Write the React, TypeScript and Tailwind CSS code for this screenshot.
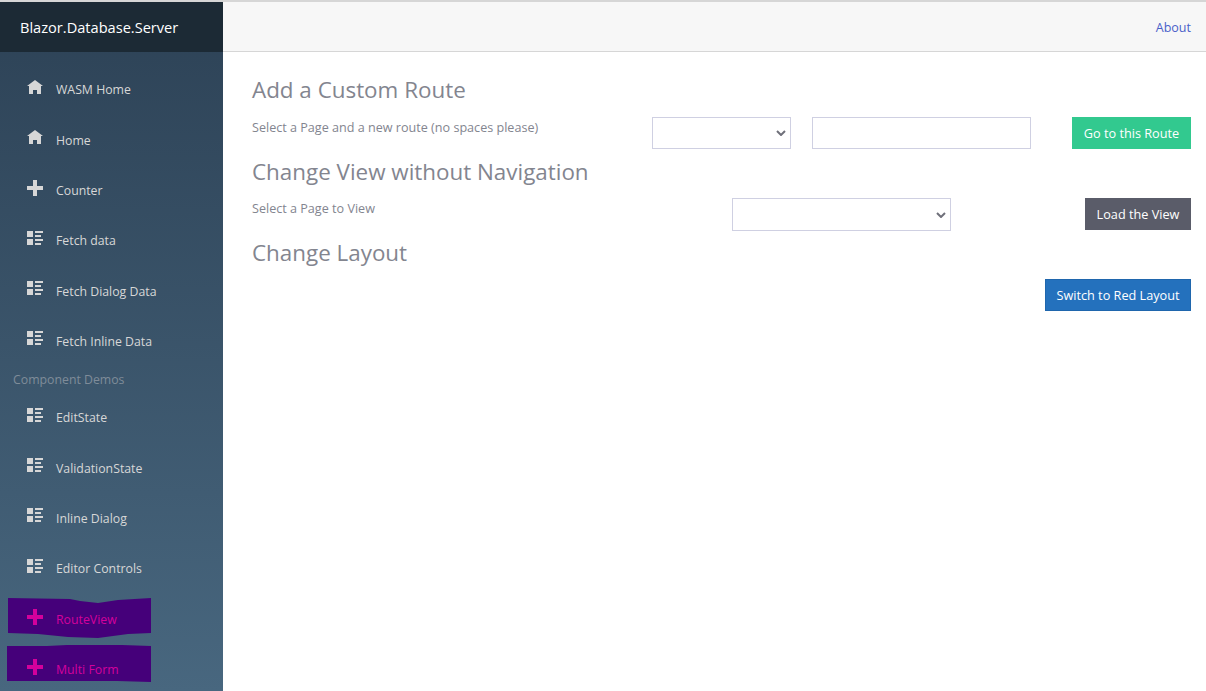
import React from "react";

const HOME = "M4 0l-4 3h1v4h2v-2h2v2h2v-4.03l1 .03-4-3z";
const PLUS = "M3 0v3h-3v2h3v3h2v-3h3v-2h-3v-3h-2z";
const LIST = "M0 0v3h3v-3h-3zm4 0v1h4v-1h-4zm0 2v1h3v-1h-3zm-4 2v3h3v-3h-3zm4 0v1h4v-1h-4zm0 2v1h3v-1h-3z";

function NavItem({ icon, label, purple }: { icon: string; label: string; purple?: 1 | 2 }) {
  return (
    <div className={`relative flex h-[50.33px] items-center pl-[27px] ${purple ? "text-[#d4009c]" : "text-[#d7d7d7]"}`}>
      {purple === 1 && (
        <svg className="absolute left-[8px] top-[3px] h-[41px] w-[143px]" viewBox="0 0 143 41" aria-hidden="true">
          <path d="M0 0 L62 1 L72 3 L90 5 L110 2 L143 0 V35 L120 36 L90 40 L60 39 L30 36 L0 35 Z" fill="#45007a" />
        </svg>
      )}
      {purple === 2 && (
        <svg className="absolute left-[7px] top-[0px] h-[38px] w-[144px]" viewBox="0 0 144 38" aria-hidden="true">
          <path d="M0 1 L40 1 L60 0 L115 0 L144 1 V37 L110 36 L70 36 L30 36 L0 36 Z" fill="#45007a" />
        </svg>
      )}
      <svg viewBox="0 0 8 8" className="relative top-[-3px] h-4 w-4 shrink-0" fill="currentColor" aria-hidden="true">
        <path d={icon} />
      </svg>
      <span className="relative ml-[13px] text-[12.3px]">{label}</span>
    </div>
  );
}

function Section({ title, later, children }: { title: string; later?: boolean; children: React.ReactNode }) {
  return (
    <section className="h-[81px]">
      <h2 className={`text-[22.4px] leading-[30px] text-[#83858f] ${later ? "mb-[11px] pt-px" : "mb-[12px]"}`}>{title}</h2>
      {children}
    </section>
  );
}

function Chevron() {
  return (
    <svg viewBox="0 0 10 6" className="pointer-events-none absolute right-[5px] top-1/2 h-[6px] w-[10px] -translate-y-1/2" fill="none" stroke="#6f707a" strokeWidth="2" aria-hidden="true">
      <path d="M1 1l4 4 4-4" />
    </svg>
  );
}

function Select({ className }: { className: string }) {
  return (
    <div className={`relative ${className}`}>
      <select className="h-full w-full appearance-none border border-[#cfd0e2] bg-white" />
      <Chevron />
    </div>
  );
}

const btn = "ml-auto h-8 pt-px text-[12.7px] text-white";
const label = "text-[12.6px] leading-[22px] text-[#83858f]";

export default function App() {
  return (
    <div className="flex h-[691px] w-[1206px] overflow-hidden border-t-2 border-[#d6d6d6] bg-white font-['Open_Sans',sans-serif]">
      <aside className="flex h-full w-[223px] shrink-0 flex-col bg-gradient-to-b from-[#2d4256] to-[#48677f]">
        <div className="flex h-[50px] shrink-0 items-center bg-[#1c2a35] pl-[20px] pt-[2px] text-[14.6px] text-white">Blazor.Database.Server</div>
        <nav className="pt-[13.5px]">
          <NavItem icon={HOME} label="WASM Home" />
          <NavItem icon={HOME} label="Home" />
          <NavItem icon={PLUS} label="Counter" />
          <NavItem icon={LIST} label="Fetch data" />
          <NavItem icon={LIST} label="Fetch Dialog Data" />
          <NavItem icon={LIST} label="Fetch Inline Data" />
          <div className="flex h-[26px] items-center pl-[13px] text-[12.3px] text-[#7f8c99]">Component Demos</div>
          <NavItem icon={LIST} label="EditState" />
          <NavItem icon={LIST} label="ValidationState" />
          <NavItem icon={LIST} label="Inline Dialog" />
          <NavItem icon={LIST} label="Editor Controls" />
          <NavItem icon={PLUS} label="RouteView" purple={1} />
          <NavItem icon={PLUS} label="Multi Form" purple={2} />
        </nav>
      </aside>
      <main className="min-w-0 flex-1">
        <header className="flex h-[50px] items-center justify-end border-b border-[#d6d6d6] bg-[#f7f7f7] pr-[15px] pt-[3px]">
          <a className="text-[12.5px] text-[#4a5fc9]">About</a>
        </header>
        <div className="pl-[29px] pr-[15px] pt-[23px]">
          <Section title="Add a Custom Route">
            <div className="flex h-8 items-start">
              <p className={`w-[400px] ${label}`}>Select a Page and a new route (no spaces please)</p>
              <Select className="h-8 w-[139px]" />
              <input className="ml-[21px] h-8 w-[219px] border border-[#cfd0e2]" />
              <button className={`${btn} w-[119px] bg-[#32c98f]`}>Go to this Route</button>
            </div>
          </Section>
          <Section title="Change View without Navigation" later>
            <div className="flex h-8 items-start">
              <p className={`w-[480px] ${label}`}>Select a Page to View</p>
              <Select className="h-[33px] w-[219px]" />
              <button className={`${btn} w-[106px] bg-[#5a5c69]`}>Load the View</button>
            </div>
          </Section>
          <Section title="Change Layout" later>
            <div className="flex h-8 items-start">
              <button className={`${btn} w-[146px] border border-[#1f66ad] bg-[#2471bd]`}>Switch to Red Layout</button>
            </div>
          </Section>
        </div>
      </main>
    </div>
  );
}
